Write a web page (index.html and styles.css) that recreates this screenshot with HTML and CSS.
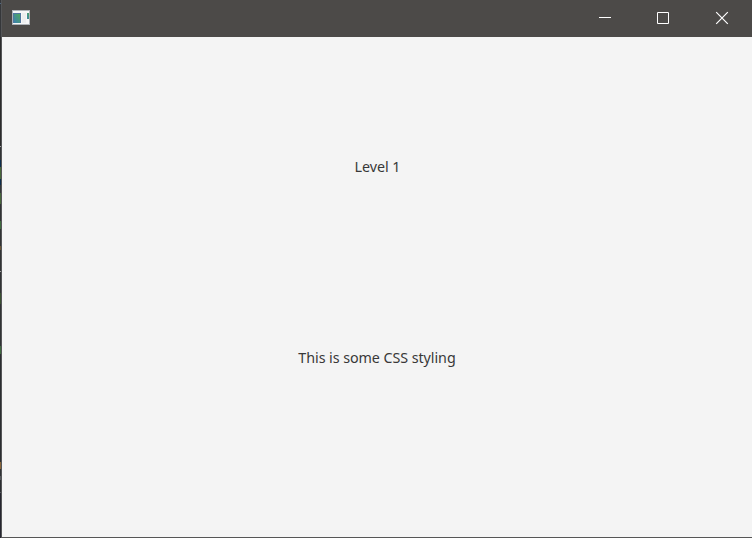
FILE: index.html
```
<!DOCTYPE html>
<html lang="en">
<head>
<meta charset="utf-8">
<title>Level 1</title>
<link rel="stylesheet" href="styles.css">
</head>
<body>
<div class="desktop-edge"></div>
<div class="window">
  <header class="titlebar">
    <svg class="app-icon" width="18" height="15" viewBox="0 0 18 15">
      <defs><linearGradient id="pane" x1="1" y1="0" x2="0" y2="1"><stop offset="0" stop-color="#4fa860"/><stop offset="1" stop-color="#3c80b0"/></linearGradient></defs>
      <rect width="18" height="15" fill="#aeb3b8"/>
      <rect x="1" y="1" width="16" height="13" fill="#f6f7f8"/>
      <rect x="1" y="3" width="8" height="10" fill="#5078a0"/>
      <rect x="2" y="4" width="6" height="9" fill="url(#pane)"/>
      <rect x="10" y="3" width="4" height="10" fill="#eceeef"/>
      <rect x="15" y="3" width="2" height="6" fill="url(#pane)"/>
    </svg>
    <div class="controls">
      <svg width="14" height="14" viewBox="0 0 14 14"><path d="M1 6.5H13"/></svg>
      <svg width="14" height="14" viewBox="0 0 14 14"><path d="M1.5 1.5H12.5V12.5H1.5Z"/></svg>
      <svg class="close" width="14" height="14" viewBox="0 0 14 14"><path d="M1.2 1.2L12.8 12.8M12.8 1.2L1.2 12.8"/></svg>
    </div>
  </header>
  <main class="content">
    <p class="label level">Level 1</p>
    <p class="label styled">This is some CSS styling</p>
  </main>
</div>
</body>
</html>
```
FILE: styles.css
```
* { box-sizing: border-box; }
body {
  margin: 0;
  height: 538px;
  display: flex;
  overflow: hidden;
  background: #555;
}
.desktop-edge {
  width: 1px;
  background: linear-gradient(#35373a 0 3px, #50677f 3px 4px, #35373a 4px 37px, #2b2b2b 37px 146px, #a0a0a0 146px 147px, #303234 147px 160px, #0c2c4c 160px 167px, #47663a 167px 179px, #0c2c4c 179px 185px, #333639 185px 193px, #47663a 193px 204px, #303234 204px 221px, #3e6a3e 221px 229px, #303234 229px 246px, #6a5434 246px 250px, #303234 250px 271px, #a0a0a0 271px 272px, #303234 272px 293px, #3a5030 293px 304px, #303234 304px 346px, #3e6a3e 346px 354px, #2b2d30 354px 462px, #886438 462px 469px, #303234 469px 476px, #55585c 476px 480px, #2b2d30 480px 492px, #55585c 492px 493px, #25252e 493px);
}
.window {
  flex: 1;
  display: flex;
  flex-direction: column;
  border-left: 1px solid #545557;
  border-bottom: 1px solid #565656;
}
.titlebar {
  height: 37px;
  display: flex;
  justify-content: space-between;
  align-items: flex-start;
  padding: 10px 23px 0 10px;
  background: #4c4a48;
}
.app-icon { display: block; }
.controls { display: flex; gap: 44px; padding-top: 1px; }
.controls svg { display: block; fill: none; stroke: #fff; stroke-width: 1; }
.controls .close { margin-left: 1px; stroke-width: 1.2; }
.content {
  flex: 1;
  display: flex;
  flex-direction: column;
  align-items: center;
  padding: 120px 0 0 0;
  background: #f4f4f4;
}
.label {
  margin: 0;
  font: 14.3px/20px "Noto Sans", sans-serif;
  color: #383838;
  white-space: nowrap;
}
.level { padding-left: 1px; letter-spacing: -0.05px; }
.styled { margin-top: 171px; letter-spacing: -0.06px; }
```
